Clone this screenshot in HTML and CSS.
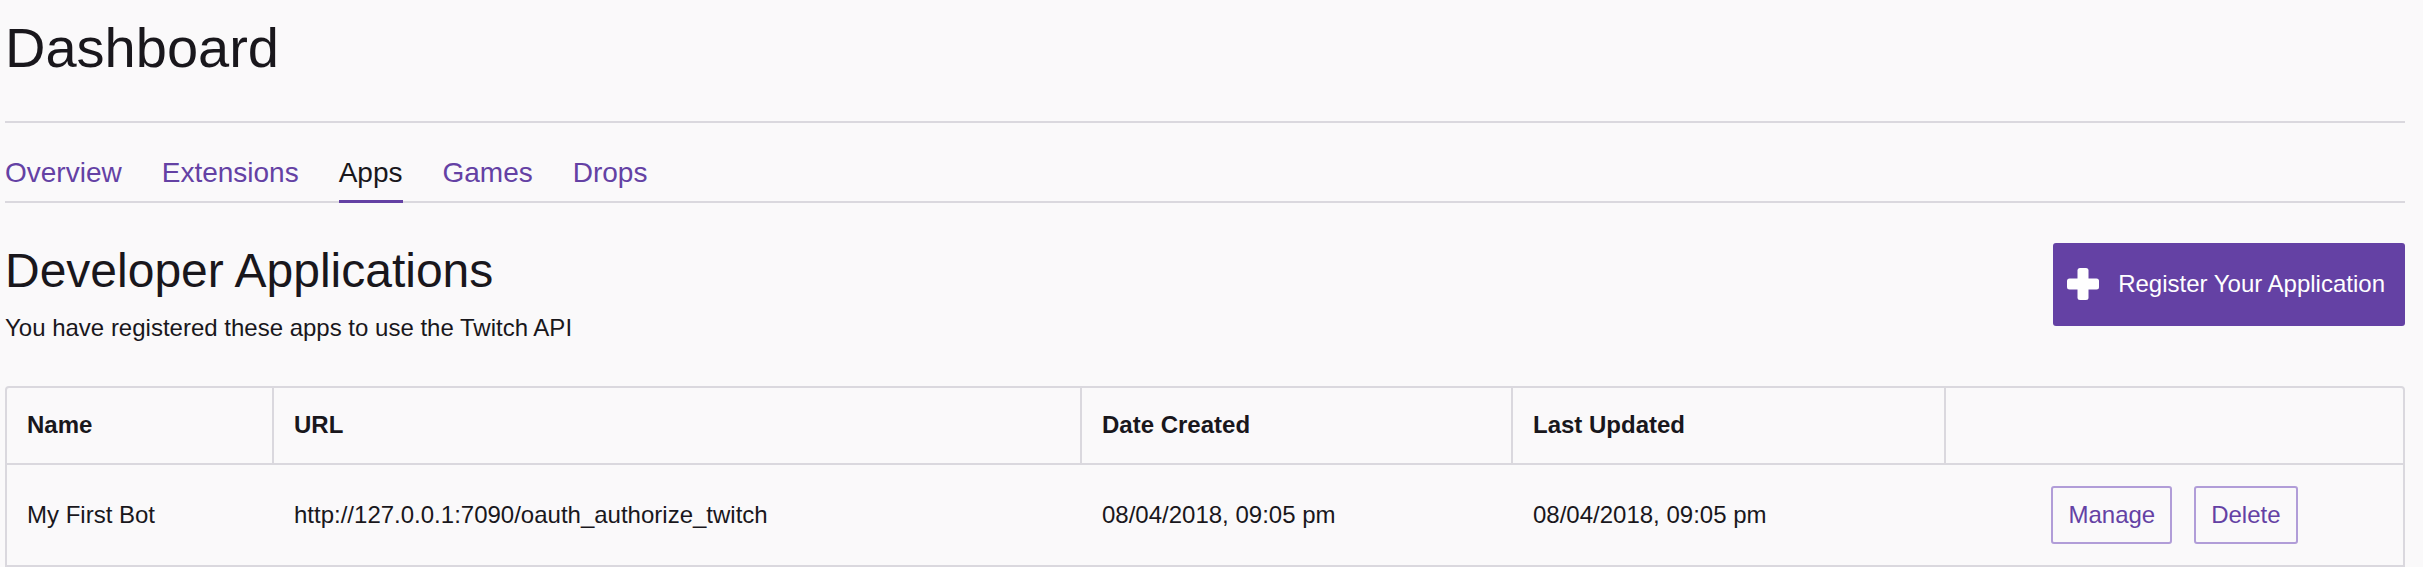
FILE: index.html
```html
<!DOCTYPE html>
<html lang="en">
<head>
<meta charset="utf-8">
<title>Dashboard</title>
<link rel="stylesheet" href="styles.css">
</head>
<body>
<div class="page">
  <header class="page-header">
    <h1 class="page-title">Dashboard</h1>
  </header>
  <nav class="tabs">
    <a class="tab" href="#">Overview</a>
    <a class="tab" href="#">Extensions</a>
    <a class="tab active" href="#">Apps</a>
    <a class="tab" href="#">Games</a>
    <a class="tab" href="#">Drops</a>
  </nav>
  <section class="apps">
    <div class="apps-head">
      <div class="apps-intro">
        <h2 class="apps-title">Developer Applications</h2>
        <p class="apps-sub">You have registered these apps to use the Twitch API</p>
      </div>
      <button class="btn-primary" type="button">
        <svg class="plus" width="32" height="32" viewBox="0 0 32 32" aria-hidden="true">
          <rect x="0" y="10.5" width="32" height="11" rx="2.5" fill="#fff"/>
          <rect x="10.5" y="0" width="11" height="32" rx="2.5" fill="#fff"/>
        </svg>
        <span>Register Your Application</span>
      </button>
    </div>
    <div class="apps-table">
      <div class="row row-head">
        <div class="cell">Name</div>
        <div class="cell">URL</div>
        <div class="cell">Date Created</div>
        <div class="cell">Last Updated</div>
        <div class="cell"></div>
      </div>
      <div class="row row-body">
        <div class="cell">My First Bot</div>
        <div class="cell">http://127.0.0.1:7090/oauth_authorize_twitch</div>
        <div class="cell">08/04/2018, 09:05 pm</div>
        <div class="cell">08/04/2018, 09:05 pm</div>
        <div class="cell cell-actions">
          <button class="btn-outline" type="button">Manage</button>
          <button class="btn-outline" type="button">Delete</button>
        </div>
      </div>
    </div>
  </section>
</div>
</body>
</html>
```

FILE: styles.css
```css
* {
  box-sizing: border-box;
}

body {
  margin: 0;
  background: #faf9fa;
  color: #19171c;
  font-family: "Liberation Sans", Arial, Helvetica, sans-serif;
}

.page {
  margin-left: 5px;
  width: 2400px;
}

.page-header {
  padding: 20px 0 46px;
  border-bottom: 2px solid #dad8de;
}

.page-title {
  margin: 0;
  font-size: 56px;
  line-height: 55px;
  font-weight: 400;
}

.tabs {
  display: flex;
  gap: 40px;
  padding-top: 35.6px;
  border-bottom: 2px solid #dad8de;
}

.tab {
  font-size: 28px;
  line-height: 28px;
  padding-bottom: 13.4px;
  margin-bottom: -2px;
  border-bottom: 3px solid transparent;
  color: #6441a4;
  text-decoration: none;
}

.tab.active {
  color: #19171c;
  border-bottom-color: #6441a4;
}

.apps-head {
  display: flex;
  justify-content: space-between;
  align-items: flex-start;
  padding-top: 40px;
}

.apps-intro {
  padding-top: 4.5px;
}

.apps-title {
  margin: 0;
  font-size: 48px;
  line-height: 48px;
  font-weight: 400;
}

.apps-sub {
  margin: 20.2px 0 0;
  font-size: 24px;
  line-height: 24px;
}

.btn-primary {
  display: flex;
  align-items: center;
  gap: 19.4px;
  height: 83px;
  padding: 0 20px 0 14px;
  border: 0;
  border-radius: 3px;
  background: #6441a4;
  color: #ffffff;
  font-family: "Liberation Sans", Arial, sans-serif;
  font-size: 24px;
  line-height: 24px;
}

.plus {
  display: block;
  flex: none;
}

.apps-table {
  margin-top: 46.3px;
  border: 2px solid #dad8de;
  border-radius: 4px 4px 0 0;
}

.row {
  display: grid;
  grid-template-columns: 267px 808px 431px 433px 1fr;
}

.row-head {
  border-bottom: 2px solid #dad8de;
}

.cell {
  display: flex;
  align-items: center;
  padding-left: 20px;
  font-size: 24px;
  line-height: 24px;
  white-space: nowrap;
}

.row-head .cell {
  height: 75px;
  font-weight: 700;
  border-right: 2px solid #dad8de;
}

.row-head .cell:last-child {
  border-right: 0;
}

.row-body .cell {
  height: 100px;
}

.cell-actions {
  justify-content: center;
  gap: 21.4px;
  padding-left: 0;
}

.btn-outline {
  height: 58px;
  padding: 0 15.3px;
  border: 2px solid #b19dd8;
  border-radius: 3px;
  background: transparent;
  color: #6441a4;
  font-family: "Liberation Sans", Arial, sans-serif;
  font-size: 24px;
  line-height: 24px;
}
```
